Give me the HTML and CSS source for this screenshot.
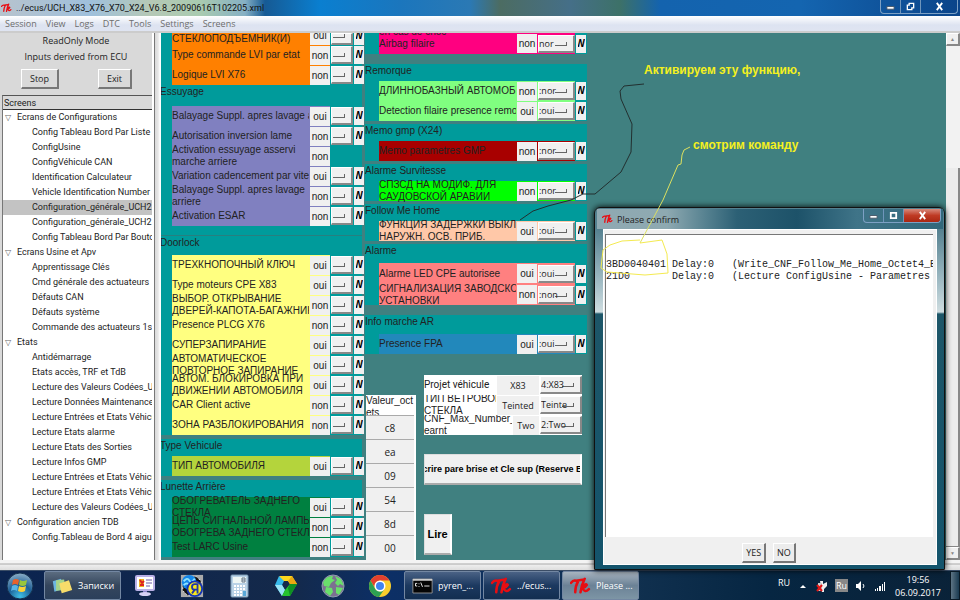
FILE: index.html
```html
<!DOCTYPE html>
<html lang="fr">
<head>
<meta charset="UTF-8">
<meta name="viewport" content="width=device-width, initial-scale=1.0">
<title>../ecus/UCH_X83_X76_X70_X24_V6.8_20090616T102205.xml</title>
<link rel="stylesheet" href="styles.css">
</head>
<body>

<svg class="defs" width="0" height="0" aria-hidden="true">
  <symbol id="tk" viewBox="0 0 20 16">
    <path d="M1 5Q3 2 6 3L12 2M8 3Q5 8 5 14M14 1Q11 7 10 14M11 10Q15 5 16 7Q15 9 12 10Q14 15 18 11" fill="none" stroke="#e80d12" stroke-width="2.4" stroke-linecap="round"/>
  </symbol>
</svg>

<header class="titlebar">
  <svg class="tk-small"><use href="#tk"/></svg>
  <span class="title">../ecus/UCH_X83_X76_X70_X24_V6.8_20090616T102205.xml</span>
  <div class="win-controls">
    <button aria-label="Minimize"><svg viewBox="0 0 10 10"><path d="M1 5h8v3H1z" fill="#fff" stroke="#456"/></svg></button>
    <button aria-label="Restore"><svg viewBox="0 0 10 10"><path d="M3.500 1.500h5v5h-2v2h-5v-5h2z" fill="none" stroke="#fff" stroke-width="1.500"/></svg></button>
    <button class="wide" aria-label="Close"><svg viewBox="0 0 10 10"><path d="M2 1l6 8M8 1L2 9" stroke="#fff" stroke-width="2"/></svg></button>
  </div>
</header>

<nav class="menubar">
  <button>Session</button>
  <button>View</button>
  <button>Logs</button>
  <button>DTC</button>
  <button>Tools</button>
  <button>Settings</button>
  <button>Screens</button>
</nav>

<main class="main">
  <aside class="sidebar">
    <p>ReadOnly Mode</p>
    <p>Inputs derived from ECU</p>
    <div class="side-buttons">
      <button>Stop</button>
      <button>Exit</button>
    </div>
    <div class="tree">
      <h2>Screens</h2>
      <ul>
        <li class="parent">Ecrans de Configurations</li>
        <li>Config Tableau Bord Par Liste</li>
        <li>ConfigUsine</li>
        <li>ConfigVéhicule CAN</li>
        <li>Identification Calculateur</li>
        <li>Vehicle Identification Number</li>
        <li class="selected">Configuration_générale_UCH2</li>
        <li>Configuration_générale_UCH2</li>
        <li>Config Tableau Bord Par Bouto</li>
        <li class="parent">Ecrans Usine et Apv</li>
        <li>Apprentissage Clés</li>
        <li>Cmd générale des actuateurs</li>
        <li>Défauts CAN</li>
        <li>Défauts système</li>
        <li>Commande des actuateurs 1s</li>
        <li class="parent">Etats</li>
        <li>Antidémarrage</li>
        <li>Etats accès, TRF et TdB</li>
        <li>Lecture des Valeurs Codées_UC</li>
        <li>Lecture Données Maintenance</li>
        <li>Lecture Entrées et Etats Véhicu</li>
        <li>Lecture Etats alarme</li>
        <li>Lecture Etats des Sorties</li>
        <li>Lecture Infos GMP</li>
        <li>Lecture Entrées et Etats Véhicu</li>
        <li>Lecture Entrées et Etats Véhicu</li>
        <li>Lecture des Valeurs Codées_UC</li>
        <li class="parent">Configuration ancien TDB</li>
        <li>Config.Tableau de Bord 4 aigu</li>
      </ul>
    </div>
  </aside>

  <div class="sash"></div>

  <section class="canvas">
    <div class="col narrow">
      <div class="group">
        <div class="rows orange">
          <div class="row cut"><label for="a1">СТЕКЛОПОДЪЕМНИК(И)</label><output>oui</output><select id="a1"><option></option></select><i>W</i></div>
          <div class="row"><label for="a2">Type commande LVI par etat</label><output>non</output><select id="a2"><option></option></select><i>W</i></div>
          <div class="row"><label for="a3">Logique LVI X76</label><output>non</output><select id="a3"><option></option></select><i>W</i></div>
        </div>
      </div>
      <div class="group tall">
        <h3>Essuyage</h3>
        <div class="rows violet">
          <div class="row"><label for="b1">Balayage Suppl. apres lavage av</label><output>oui</output><select id="b1"><option></option></select><i>W</i></div>
          <div class="row"><label for="b2">Autorisation inversion lame</label><output>non</output><select id="b2"><option></option></select><i>W</i></div>
          <div class="row"><span class="name">Activation essuyage asservi<br>marche arriere</span><output>non</output></div>
          <div class="row"><label for="b4">Variation cadencement par vites</label><output>oui</output><select id="b4"><option></option></select><i>W</i></div>
          <div class="row"><label for="b5">Balayage Suppl. apres lavage<br>arriere</label><output>non</output><select id="b5"><option></option></select><i>W</i></div>
          <div class="row"><label for="b6">Activation ESAR</label><output>non</output><select id="b6"><option></option></select><i>W</i></div>
        </div>
      </div>
      <div class="group door">
        <h3>Doorlock</h3>
        <div class="rows yellow">
          <div class="row"><label for="c1">ТРЕХКНОПОЧНЫЙ КЛЮЧ</label><output>oui</output><select id="c1"><option></option></select><i>W</i></div>
          <div class="row"><label for="c2">Type moteurs CPE X83</label><output>oui</output><select id="c2"><option></option></select><i>W</i></div>
          <div class="row"><label for="c3">ВЫБОР. ОТКРЫВАНИЕ<br>ДВЕРЕЙ-КАПОТА-БАГАЖНИК</label><output>non</output><select id="c3"><option></option></select><i>W</i></div>
          <div class="row"><label for="c4">Presence PLCG X76</label><output>non</output><select id="c4"><option></option></select><i>W</i></div>
          <div class="row"><label for="c5">СУПЕРЗАПИРАНИЕ</label><output>oui</output><select id="c5"><option></option></select><i>W</i></div>
          <div class="row"><label for="c6">АВТОМАТИЧЕСКОЕ<br>ПОВТОРНОЕ ЗАПИРАНИЕ</label><output>oui</output><select id="c6"><option></option></select><i>W</i></div>
          <div class="row"><label for="c7">АВТОМ. БЛОКИРОВКА ПРИ<br>ДВИЖЕНИИ АВТОМОБИЛЯ</label><output>oui</output><select id="c7"><option></option></select><i>W</i></div>
          <div class="row"><label for="c8">CAR Client active</label><output>non</output><select id="c8"><option></option></select><i>W</i></div>
          <div class="row"><label for="c9">ЗОНА РАЗБЛОКИРОВАНИЯ</label><output>non</output><select id="c9"><option></option></select><i>W</i></div>
        </div>
      </div>
      <div class="group spaced">
        <h3>Type Vehicule</h3>
        <div class="rows lime">
          <div class="row"><label for="d1">ТИП АВТОМОБИЛЯ</label><output>oui</output><select id="d1"><option></option></select><i>W</i></div>
        </div>
      </div>
      <div class="group spaced">
        <h3>Lunette Arrière</h3>
        <div class="rows green">
          <div class="row"><label for="e1">ОБОГРЕВАТЕЛЬ ЗАДНЕГО<br>СТЕКЛА</label><output>oui</output><select id="e1"><option></option></select><i>W</i></div>
          <div class="row"><label for="e2">ЦЕПЬ СИГНАЛЬНОЙ ЛАМПЫ<br>ОБОГРЕВА ЗАДНЕГО СТЕКЛ</label><output>non</output><select id="e2"><option></option></select><i>W</i></div>
          <div class="row"><label for="e3">Test LARC Usine</label><output>non</output><select id="e3"><option></option></select><i>W</i></div>
        </div>
      </div>
    </div>

    <div class="col broad">
      <div class="group airbag">
        <div class="rows pink">
          <div class="row"><label for="f1">en cas de choc<br>Airbag filaire</label><output>non</output><select id="f1"><option>nor</option></select><i>W</i></div>
        </div>
      </div>
      <div class="group far">
        <h3>Remorque</h3>
        <div class="rows mint">
          <div class="row"><label for="g1">ДЛИННОБАЗНЫЙ АВТОМОБИ</label><output>non</output><select id="g1"><option>:nor</option></select><i>W</i></div>
          <div class="row"><label for="g2">Detection filaire presence remor</label><output>oui</output><select id="g2"><option>:oui</option></select><i>W</i></div>
        </div>
      </div>
      <div class="group near">
        <h3>Memo gmp (X24)</h3>
        <div class="rows red">
          <div class="row"><label for="h1">Memo parametres GMP</label><output>non</output><select id="h1"><option>:nor</option></select><i>W</i></div>
        </div>
      </div>
      <div class="group near">
        <h3>Alarme Survitesse</h3>
        <div class="rows bright">
          <div class="row"><label for="j1">СПЗСД НА МОДИФ. ДЛЯ<br>САУДОВСКОЙ АРАВИИ</label><output>non</output><select id="j1"><option>:nor</option></select><i>W</i></div>
        </div>
      </div>
      <div class="group near">
        <h3>Follow Me Home</h3>
        <div class="rows peach">
          <div class="row"><label for="k1">ФУНКЦИЯ ЗАДЕРЖКИ ВЫКЛ.<br>НАРУЖН. ОСВ. ПРИБ.</label><output>oui</output><select id="k1"><option>:oui</option></select><i>W</i></div>
        </div>
      </div>
      <div class="group near roomy">
        <h3>Alarme</h3>
        <div class="rows coral">
          <div class="row"><label for="l1">Alarme LED CPE autorisee</label><output>oui</output><select id="l1"><option>:oui</option></select><i>W</i></div>
          <div class="row"><label for="l2">СИГНАЛИЗАЦИЯ ЗАВОДСКО<br>УСТАНОВКИ</label><output>non</output><select id="l2"><option>:non</option></select><i>W</i></div>
        </div>
      </div>
      <div class="group far roomy">
        <h3>Info marche AR</h3>
        <div class="rows blue">
          <div class="row"><label for="m1">Presence FPA</label><output>oui</output><select id="m1"><option>:oui</option></select><i>W</i></div>
        </div>
      </div>

      <div class="lower">
        <table class="octets">
          <thead><tr><th>Valeur_oct<br>ets</th></tr></thead>
          <tbody>
            <tr><td>c8</td></tr>
            <tr><td>ea</td></tr>
            <tr><td>09</td></tr>
            <tr><td>54</td></tr>
            <tr><td>8d</td></tr>
            <tr><td>00</td></tr>
          </tbody>
        </table>
        <div class="params">
          <div class="param"><label class="ui" for="p1">Projet véhicule</label><output>X83</output><select id="p1"><option>4:X83</option></select></div>
          <div class="param"><label for="p2">ТИП ВЕТРОВОГ<br>СТЕКЛА</label><output>Teinted</output><select id="p2"><option>Teinte</option></select></div>
          <div class="param"><label for="p3">CNF_Max_Number_L<br>earnt</label><output class="slim">Two</output><select id="p3"><option>2:Two</option></select></div>
          <button class="write"><span>Ecrire pare brise et Cle sup (Reserve BV</span></button>
          <button class="read">Lire</button>
        </div>
      </div>
    </div>
  </section>

  <div class="vscroll">
    <button aria-label="Up">▲</button>
    <div class="track"><div class="thumb"></div></div>
    <button aria-label="Down">▼</button>
  </div>
</main>

<div class="bottom-sash"></div>

<footer class="taskbar">
  <button class="start" aria-label="Start">
    <svg viewBox="0 0 28 28">
      <defs><radialGradient id="orb" cx=".5" cy=".9" r=".9"><stop offset="0" stop-color="#3fc0e8"/><stop offset=".5" stop-color="#1c5f96"/><stop offset="1" stop-color="#8fb0c8"/></radialGradient></defs>
      <circle cx="14" cy="14" r="13" fill="url(#orb)" stroke="#14304e"/>
      <path d="M7 8q3-2 6 0l-1 5q-3-2-6 0z" fill="#e8622b"/>
      <path d="M14 8q3 2 7 0l-1 5q-3 2-7 0z" fill="#9ac63b"/>
      <path d="M6 14q3-2 6 0l-1 5q-3-2-6 0z" fill="#58b5e6"/>
      <path d="M13 14q3 2 7 0l-1 5q-3 2-7 0z" fill="#fbd13a"/>
    </svg>
  </button>
  <button class="task notes">
    <svg viewBox="0 0 26 20"><path d="M1 4l10-3 4 12-12 4z" fill="#6cb6e0"/><path d="M5 3l10-1 2 13-12 1z" fill="#a6d48a"/><path d="M9 7l12-4 4 12-13 4z" fill="#f7dc6a"/></svg>
    Записки
  </button>
  <div class="pins">
    <button aria-label="Display"><svg viewBox="0 0 24 24"><rect x="3" y="2" width="18" height="14" rx="1" fill="#fff" stroke="#b9b0e6" stroke-width="2"/><path d="M6 5h5v8H6z" fill="#f0b21b"/><path d="M7 6l2 3 2-2M7 11h4" stroke="#d22" stroke-width="2" fill="none"/><path d="M13 6h6M13 9h6M13 12h4" stroke="#6e5aa8"/><path d="M10 17h4v2h-4z" fill="#8f84cf"/><ellipse cx="12" cy="20" rx="6" ry="2" fill="#d6d0f4"/></svg></button>
    <button aria-label="Yandex"><svg viewBox="0 0 26 26"><path d="M1 1h24v24H1z" fill="#aaa"/><path d="M3 8l5-5h10l5 5v10l-5 5H8l-5-5z" fill="#111" stroke="#eee" stroke-dasharray="2 2"/><circle cx="10" cy="9" r="8" fill="#1487ea"/><path d="M4 8q4-5 6-1t6-2M4 12q3-3 5-1" stroke="#8ee3ff" stroke-width="2" fill="none"/><circle cx="16" cy="16" r="8" fill="#f8e71c" stroke="#1535b5" stroke-width="2"/><path d="M19 21v-10h-3q-3 0-3 3t3 3h3M16 17l-3 4" stroke="#2437a8" stroke-width="2" fill="none"/></svg></button>
    <button aria-label="Calculator"><svg viewBox="0 0 24 24"><rect x="4" y="1" width="17" height="22" rx="1" fill="#b9d2e6" stroke="#7b9ab5"/><path d="M6 3h13v6H6z" fill="#eef6f4"/><path d="M15 4h3v4h-3zM15 6h3" fill="none" stroke="#678"/><path d="M7 12h12M7 15h12M7 18h12M7 21h12" stroke="#fff" stroke-width="2" stroke-dasharray="2 1"/><path d="M16 17h3v5h-3z" fill="#58a8d8"/></svg></button>
    <button aria-label="Drive"><svg viewBox="0 0 24 24"><path d="M5 2h13l5 8h-7l-2-3H8z" fill="#fbd71d"/><path d="M18 2l5 8h-7l-2-3z" fill="#e9a812"/><path d="M5 2L1 11l7 11 3-6-3-5 2-4z" fill="#36b9ea"/><path d="M1 11h7l3 5-3 6z" fill="#9be3f4"/><path d="M23 10l-7 12H8l3-6 5-6z" fill="#25c22d"/><path d="M23 10l-7 12-2-8 2-4z" fill="#0f8f23"/></svg></button>
    <button aria-label="Globe"><svg viewBox="0 0 24 24"><circle cx="12" cy="12" r="11" fill="#7c7191"/><path d="M2 8q4-7 10-6l-1 3 3 1-4 3-2 4-5-1zM14 2l6 3 3 7-4-2-2 2-3-3 2-3zM5 13l6 1 1 4-3 4-5-4zM15 13l7 1-4 7-3-2z" fill="#69df6b"/><circle cx="12" cy="12" r="11" fill="none" stroke="#8f9caf"/></svg></button>
    <button aria-label="Chrome"><svg viewBox="0 0 24 24"><circle cx="12" cy="12" r="11" fill="#f9ce2c"/><path d="M2.500 6.500A11 11 0 0 1 21.500 6.500H12a5.500 5.500 0 0 0-5 7.500z" fill="#e2402f"/><path d="M2.500 6.500A11 11 0 0 0 11 23l5.500-8a5.500 5.500 0 0 1-9.500-.5z" fill="#2da152"/><circle cx="12" cy="12" r="5.500" fill="#fff"/><circle cx="12" cy="12" r="4" fill="#3f83f0"/></svg></button>
  </div>
  <button class="task"><svg viewBox="0 0 24 18"><path d="M1 1h22v16H1z" fill="#050505" stroke="#999"/><path d="M1 1h22v2H1z" fill="#ccc"/><path d="M4 6h2M4 9h2M4 6v3M8 6v1M8 9v1M10 5l2 5M14 9h6" stroke="#fff" fill="none"/></svg>pyren_...</button>
  <button class="task"><svg viewBox="0 0 20 16"><use href="#tk"/></svg>../ecus...</button>
  <button class="task active"><svg viewBox="0 0 20 16"><use href="#tk"/></svg>Please ...</button>
  <div class="tray">
    <span class="lang">RU</span>
    <svg viewBox="0 0 12 12"><path d="M3 8l3-3 3 3z" fill="#fff"/></svg>
    <svg viewBox="0 0 12 12"><path d="M4 1h3v3l4-2v4l-3 3v3H6z" fill="#eee"/><path d="M2 3h4v8H2z" fill="#ccc"/><path d="M1 5l5 6M6 5l-5 6" stroke="#e01515" stroke-width="2"/></svg>
    <span class="layout">Ru</span>
    <svg viewBox="0 0 12 12"><path d="M1 4h2l3-3v10L3 8H1z" fill="#fff"/><path d="M8 4q2 2 0 4" stroke="#fff" fill="none"/></svg>
    <svg viewBox="0 0 12 12"><path d="M1 9h1v2H1zM3 8h1v3H3zM5 6h2v5H5zM8 4h1v7H8zM10 2h1v9h-1z" fill="#fff"/></svg>
  </div>
  <div class="clock"><span>19:56</span><span>06.09.2017</span></div>
  <button class="show-desktop" aria-label="Show desktop"></button>
</footer>

<div class="dialog" role="dialog" aria-labelledby="dlg">
  <div class="dialog-title">
    <svg class="tk-small"><use href="#tk"/></svg>
    <span id="dlg">Please confirm</span>
    <div class="win-controls">
      <button aria-label="Minimize"><svg viewBox="0 0 10 10"><path d="M1 5h8v3H1z" fill="#fff" stroke="#456"/></svg></button>
      <button aria-label="Maximize"><svg viewBox="0 0 10 10"><path d="M2 2h6v6H2z" fill="none" stroke="#fff" stroke-width="2"/></svg></button>
      <button class="wide close" aria-label="Close"><svg viewBox="0 0 10 10"><path d="M2 1l6 8M8 1L2 9" stroke="#fff" stroke-width="2"/></svg></button>
    </div>
  </div>
  <div class="dialog-body">
    <pre>


3BD0040401 Delay:0   (Write_CNF_Follow_Me_Home_Octet4_B
21D0       Delay:0   (Lecture ConfigUsine - Parametres</pre>
    <div class="dialog-buttons">
      <button>YES</button>
      <button>NO</button>
    </div>
  </div>
</div>

<!-- hand-drawn notes over the windows -->
<div class="notes-layer">
  <svg viewBox="0 0 960 600">
    <path d="M644 84L624 86L620 91L621 99L632 124L631 152L621 172L595 194L583 194L571 200L548 206L533 211L520 220" stroke="#222f2f"/>
    <path d="M690 147L684 150L682 155L681 164L678 165L663 200L640 243" stroke="#dce060"/>
    <path d="M640 243L662 240L667 254L668 273L645 275L607 272L601 268L603 250L610 245L622 241L640 240" stroke="#f4ea50"/>
  </svg>
  <p class="note first">Активируем эту функцию,</p>
  <p class="note second">смотрим команду</p>
</div>

</body>
</html>
```
FILE: styles.css
```css
* {
  box-sizing: border-box;
  margin: 0;
  padding: 0;
}

body {
  display: flex;
  flex-direction: column;
  height: 100vh;
  position: relative;
  overflow: hidden;
  font: 9px/15px "Open Sans", "Noto Sans", sans-serif;
  color: #222;
  background: #d9d9d9;
}

button,
select {
  font: inherit;
  color: inherit;
  border: none;
  background: none;
  border-radius: 0;
}

.defs {
  position: absolute;
}

.tk-small {
  width: 11px;
  height: 10px;
}

/* Barre de titre */
.titlebar {
  display: flex;
  align-items: center;
  gap: 4px;
  height: 16px;
  flex: none;
  padding-left: 1px;
  background: linear-gradient(90deg, #b7c3cd 0, #9fc0dc 90px, #b5c8b6 150px, #a9cbb0 200px, #86b0c4 245px, #165a94 265px, #0a7fd0 320px, #1b76bd 400px, #2b79b4 470px, #4c6c62 500px, #456f88 570px, #3d7168 620px, #1463ae 660px, #1465b0 800px, #0b4489 100%);
  color: #111;
}

.title {
  flex: 1;
  font-family: Roboto, sans-serif;
  font-size: 9px;
  white-space: nowrap;
}

.win-controls {
  display: flex;
  align-self: flex-start;
  height: 14px;
  border: 1px solid #7da0c4;
  border-top: none;
  border-radius: 0 0 4px 4px;
  margin-right: 2px;
  overflow: hidden;
}

.win-controls button {
  display: flex;
  align-items: center;
  justify-content: center;
  width: 20px;
  border-right: 1px solid #6f95bb;
}

.win-controls .wide {
  width: 36px;
  border-right: none;
}

.win-controls svg {
  width: 9px;
  height: 9px;
}

/* Menu */
.menubar {
  display: flex;
  gap: 9px;
  flex: none;
  height: 17px;
  padding-left: 5px;
  background: linear-gradient(#fff, #dde3f1 60%, #dfe4f1);
  border-bottom: 2px solid #ccc;
  color: #6d6d6d;
}

.main {
  display: flex;
  flex: 1;
  min-height: 0;
}

/* Panneau de gauche */
.sidebar {
  display: flex;
  flex-direction: column;
  width: 152px;
  flex: none;
  text-align: center;
}

.sidebar p {
  height: 16px;
}

.side-buttons {
  display: flex;
  justify-content: space-between;
  padding: 4px 20px 6px 21px;
}

.side-buttons button,
.dialog-buttons button {
  height: 20px;
  background: #ececec;
  border: 1px solid #fff;
  border-right: 2px solid #777;
  border-bottom: 2px solid #777;
}

.side-buttons button {
  width: 38px;
  background: #d9d9d9;
}

.side-buttons button + button {
  width: 34px;
}

.tree {
  flex: 1;
  min-height: 0;
  margin-left: 2px;
  overflow: hidden;
  text-align: left;
  font-family: Roboto, sans-serif;
  background: #fff;
  border-top: 1px solid #555;
  border-left: 1px solid #777;
}

.tree h2 {
  height: 14px;
  padding-left: 1px;
  font-size: 9px;
  font-weight: normal;
  background: #d9d9d9;
  border-bottom: 1px solid #333;
}

.tree li {
  height: 15px;
  padding-left: 29px;
  list-style: none;
  white-space: nowrap;
  overflow: hidden;
}

.tree .parent {
  padding-left: 2px;
}

.tree .parent::before {
  content: "▽";
  display: inline-block;
  width: 12px;
  color: #666;
  font: 8px/12px "DejaVu Sans", sans-serif;
}

.tree .selected {
  background: #c3c3c3;
}

.sash {
  width: 9px;
  flex: none;
  background: linear-gradient(90deg, #fff 2px, #777 2px, #777 3px, #d9d9d9 3px, #e6e6e6 6px, #fff 8px);
}

/* Zone de l'écran ECU */
.canvas {
  display: flex;
  gap: 3px;
  flex: 1;
  min-width: 0;
  overflow: hidden;
  background: #408080;
  font: 10px/12px "Liberation Sans", Arial, sans-serif;
}

.narrow {
  width: 201px;
  flex: none;
}

.broad {
  width: 222px;
  flex: none;
}

.group {
  background: #009b9b;
}

.group h3 {
  height: 17px;
  padding-top: 1px;
  font-size: 10px;
  font-weight: normal;
}

.narrow .group h3 {
  text-indent: -1px;
  overflow: hidden;
}

.narrow .group.tall h3 {
  height: 21px;
}

.group.tall {
  padding-bottom: 9px;
  border-bottom: 1px solid #287f7f;
}

.narrow .group.door h3 {
  height: 19px;
}

.group.spaced {
  margin-top: 4px;
}

.group.near {
  margin-top: 3px;
}

.group.far {
  margin-top: 10px;
}

.group.roomy h3 {
  height: 19px;
}

.rows {
  margin-left: 11px;
  background-image: linear-gradient(var(--fill), var(--fill));
  background-size: 158px 100%;
  background-repeat: no-repeat;
}

.broad .rows {
  margin-left: 14px;
  background-size: 196px 100%;
}

.orange { --fill: #ff8000; }
.violet { --fill: #8080c0; }
.yellow { --fill: #ffff80; }
.lime { --fill: #b4d43c; }
.green { --fill: #008040; }
.pink { --fill: #ff0080; }
.mint { --fill: #80ff80; }
.red { --fill: #a80000; }
.bright { --fill: #00ff00; }
.peach { --fill: #ffc8a8; }
.coral { --fill: #ff8080; }
.blue { --fill: #2288bb; }

.row {
  display: grid;
  grid-template: 20px / 137px 20px 22px 10px;
  column-gap: 1px;
  align-items: center;
  height: 20px;
}

.broad .row {
  grid-template-columns: 137px 20px 37px 10px;
}

.coral .row,
.airbag .row {
  grid-template-rows: 21px;
  height: 21px;
}

.row.cut {
  grid-template-rows: 12px;
  align-items: end;
  height: 12px;
}

.row label,
.name {
  white-space: nowrap;
  overflow-x: clip;
}

.airbag .row label {
  align-self: end;
  padding-bottom: 4px;
}

.row output {
  height: 19px;
  line-height: 19px;
  text-align: center;
  background: #f0f0f0;
}

.row select,
.param select {
  appearance: none;
  width: 100%;
  height: 18px;
  overflow: hidden;
  font: 9px/16px "Open Sans", sans-serif;
  background: linear-gradient(#666, #666) right 6px bottom 5px / 12px 1px no-repeat, linear-gradient(#666, #666) right 6px bottom 5px / 1px 4px no-repeat, #f0f0f0;
  border: 1px solid #fff;
  border-right: 2px solid #888;
  border-bottom: 2px solid #888;
}

/* seul le bas du W dépasse du cadre à droite */
.row i {
  display: flex;
  justify-content: flex-end;
  height: 18px;
  overflow: hidden;
  font-style: normal;
  font-weight: bold;
  line-height: 18px;
  color: #000;
  background: #f0f0f0;
  border: solid #f0f0f0;
  border-width: 0 1px 0 2px;
}

.row.cut output,
.row.cut select,
.row.cut i {
  height: 12px;
  line-height: 6px;
}

/* Partie basse */
.lower {
  display: flex;
  align-items: flex-start;
  gap: 8px;
}

.octets {
  width: 50px;
  margin: 41px 0 0 1px;
  border-collapse: collapse;
  background: #f0f0f0;
  border-right: 2px solid #fff;
}

.octets th {
  display: block;
  height: 20px;
  overflow: hidden;
  font-weight: normal;
  text-align: left;
  background: #fff;
}

.octets td {
  height: 24px;
  text-align: center;
  font: 10px/12px "Open Sans", sans-serif;
  border-top: 1px solid #aaa;
}

.params {
  width: 158px;
  padding-top: 21px;
}

.param {
  display: grid;
  grid-template: 20px / 1fr auto 42px;
  align-items: center;
  column-gap: 1px;
  height: 20px;
  background: #fff;
  overflow: hidden;
}

.param label {
  overflow: hidden;
  white-space: nowrap;
}

.param .ui {
  font-family: Roboto, sans-serif;
}

.param output {
  width: 42px;
  font: 9px/19px "Open Sans", sans-serif;
  text-align: center;
  background: #f0f0f0;
}

.param .slim {
  width: 26px;
}

.write,
.read {
  display: flex;
  justify-content: center;
  align-items: center;
  overflow: hidden;
  color: #000;
  background: #f0f0f0;
  border: 1px solid #ddd;
  border-right: 2px solid #fff;
  border-bottom: 2px solid #aaa;
  font-weight: bold;
}

.write {
  width: 158px;
  height: 31px;
  margin-top: 19px;
  font-size: 9px;
}

.write span {
  white-space: nowrap;
}

.read {
  width: 28px;
  height: 41px;
  margin-top: 29px;
  font-size: 11px;
}

.vscroll {
  display: flex;
  flex-direction: column;
  width: 14px;
  flex: none;
  background: #f2f2f2;
}

.vscroll button {
  height: 13px;
  font-size: 5px;
  line-height: 10px;
  color: #888;
  background: #f0f0f0;
  border: 1px solid #fff;
  border-right: 2px solid #888;
  border-bottom: 2px solid #888;
}

.track {
  flex: 1;
  padding-top: 122px;
}

.thumb {
  height: 100%;
  background: #ececec;
  border-right: 2px solid #888;
  border-bottom: 1px solid #888;
}

.bottom-sash {
  height: 10px;
  flex: none;
  background: linear-gradient(#f4f4f4 3px, #aaa 4px, #eee 5px, #ddd);
}

/* Barre des tâches */
.taskbar {
  display: flex;
  height: 30px;
  flex: none;
  color: #fff;
  background: linear-gradient(90deg, #0b2450, #14294a 30%, #0c2f66 40%, #10304f 66%, #062642 80%, #0a2238);
  border-top: 1px solid #3b4d66;
}

.start {
  width: 28px;
  margin: 0 10px 0 6px;
}

.start svg {
  display: block;
}

.task {
  display: flex;
  align-items: center;
  gap: 5px;
  width: 77px;
  margin-right: 2px;
  padding-left: 7px;
  white-space: nowrap;
  overflow: hidden;
  background: linear-gradient(#4a6285, #1c3960 50%, #132e50);
  border: 1px solid #7387a2;
  border-radius: 2px;
}

.task svg {
  width: 21px;
  height: 18px;
  flex: none;
}

.task.notes {
  background: linear-gradient(#5b6c80, #35465d 50%, #2b3f5b);
}

.task.active {
  background: linear-gradient(#a7b3bf, #6b8296 50%, #7d95a5);
}

.pins {
  display: flex;
  gap: 23px;
  margin: 0 12px 0 10px;
}

.pins button {
  width: 24px;
}

.pins svg {
  display: block;
  width: 24px;
  height: 24px;
}

.tray {
  display: flex;
  align-items: center;
  gap: 7px;
  margin-left: auto;
}

.tray svg {
  width: 12px;
  height: 12px;
}

.lang {
  margin-bottom: 6px;
}

.layout {
  width: 13px;
  line-height: 13px;
  text-align: center;
  background: #888;
}

.clock {
  display: flex;
  flex-direction: column;
  justify-content: center;
  width: 64px;
  line-height: 13px;
  text-align: center;
}

.show-desktop {
  width: 10px;
  background: linear-gradient(90deg, #5d7484, #1a3a50);
  border: 1px solid #0a1a26;
}

/* Fenêtre de confirmation */
.dialog {
  position: absolute;
  top: 207px;
  right: 15px;
  bottom: 30px;
  width: 351px;
  display: flex;
  flex-direction: column;
  padding: 1px 7px 4px 8px;
  background: linear-gradient(#54808f 20px, #a9c2ca 80px, #cfdde0 104px, #1d5668 106px, #14546c);
  border: 1px solid #111;
  border-radius: 6px 6px 0 0;
  box-shadow: 0 0 6px #000;
}

.dialog-title {
  display: flex;
  align-items: center;
  gap: 4px;
  height: 20px;
  margin: 0 -6px;
  padding-left: 5px;
  background: linear-gradient(90deg, #8fa9b2 0, #8ea9b1 70px, #54808f 110px, #2c6075 140px, #1d5269 200px, #3f7488 260px, #31687b 100%);
}

.dialog-title .win-controls {
  margin-left: auto;
}

.dialog-title .close {
  background: linear-gradient(#d88a7c, #bf3a24 50%, #a92712);
}

.dialog-body {
  display: flex;
  flex-direction: column;
  flex: 1;
  padding: 4px 3px 0 1px;
  background: #f0f0f0;
  border: 1px solid #fff;
}

.dialog-body pre {
  flex: 1;
  overflow: hidden;
  font: 10px/12px "Liberation Mono", "Courier New", monospace;
  background: #fff;
  border-top: 1px solid #777;
  border-left: 1px solid #777;
}

.dialog-buttons {
  display: flex;
  justify-content: center;
  gap: 7px;
  padding: 6px 0 1px;
}

.dialog-buttons button {
  padding: 0 3px;
}

/* Annotations */
.notes-layer {
  position: absolute;
  top: 0;
  left: 0;
  width: 960px;
  pointer-events: none;
}

.notes-layer path {
  fill: none;
  stroke-width: 1;
}

.note {
  position: absolute;
  font: bold 12px/14px "Liberation Sans", Arial, sans-serif;
  color: #f4f01e;
  white-space: nowrap;
}

.first {
  top: 63px;
  left: 644px;
}

.second {
  top: 138px;
  left: 693px;
}
```
